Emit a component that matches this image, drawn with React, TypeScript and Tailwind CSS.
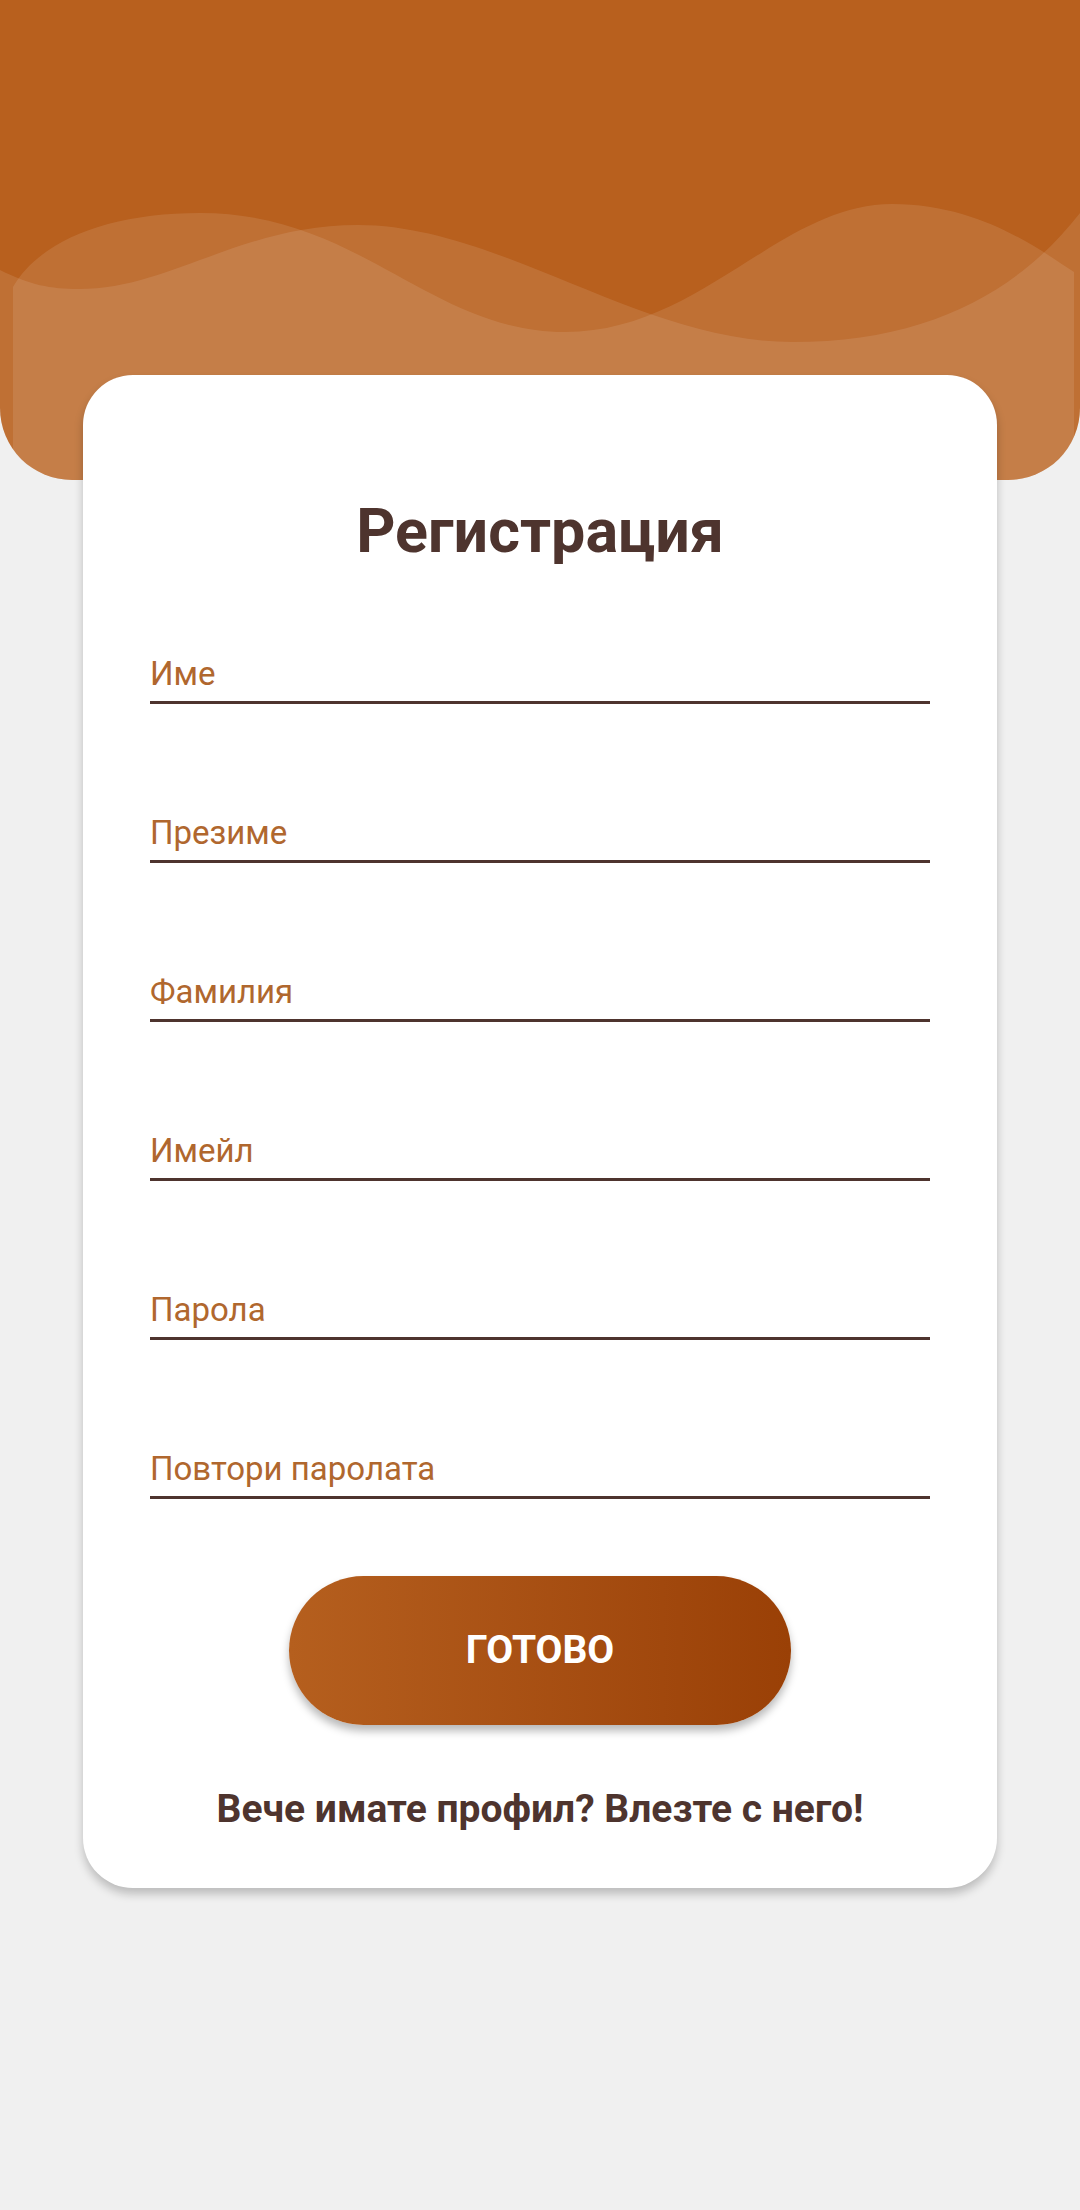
const FIELDS = ['Име', 'Презиме', 'Фамилия', 'Имейл', 'Парола', 'Повтори паролата'];

function HeaderWaves() {
  return (
    <svg className="absolute inset-0 w-full h-full" viewBox="0 0 1080 480" preserveAspectRatio="none">
      <path
        d="M0,270 C30,285 50,289 79,289 C170,289 240,225 358,225 C500,225 640,342 792,342 C930,342 1020,290 1080,213 L1080,480 L0,480 Z"
        fill="#ffffff"
        fillOpacity="0.1"
      />
      <path
        d="M13,287 C40,240 110,213 200,213 C360,213 430,332 565,332 C700,332 780,204 892,204 C980,204 1040,250 1074,272 L1074,480 L13,480 Z"
        fill="#ffffff"
        fillOpacity="0.1"
      />
    </svg>
  );
}

export default function App() {
  return (
    <div className="min-h-[2210px] bg-[#f0f0f0] font-['Roboto','Noto_Sans',sans-serif]">
      <div className="relative h-[480px] overflow-hidden rounded-b-[72px] bg-[#b8601e]">
        <HeaderWaves />
      </div>

      <div className="relative z-10 mx-[83px] -mt-[105px] rounded-[50px] bg-white px-[67px] pt-[120px] pb-[56px] shadow-[0_6px_10px_rgba(0,0,0,0.22)]">
        <h1 className="text-center text-[61px] leading-[72px] font-bold text-[#4e342e]">Регистрация</h1>

        <div className="mt-[88px] flex flex-col gap-[110px]">
          {FIELDS.map((f) => (
            <div key={f} className="border-b-[3px] border-[#4e342e] pb-[8px] text-[33px] leading-[38px] text-[#b0672e]">
              {f}
            </div>
          ))}
        </div>

        <button className="mx-auto mt-[77px] flex h-[149px] w-[502px] items-center justify-center rounded-full bg-gradient-to-r from-[#b55f1e] to-[#9a4006] text-[39px] font-bold text-white shadow-[0_6px_8px_rgba(0,0,0,0.28)]">
          ГОТОВО
        </button>

        <p className="mt-[61px] text-center text-[39px] leading-[46px] font-bold text-[#4e342e]">
          Вече имате профил? Влезте с него!
        </p>
      </div>
    </div>
  );
}
